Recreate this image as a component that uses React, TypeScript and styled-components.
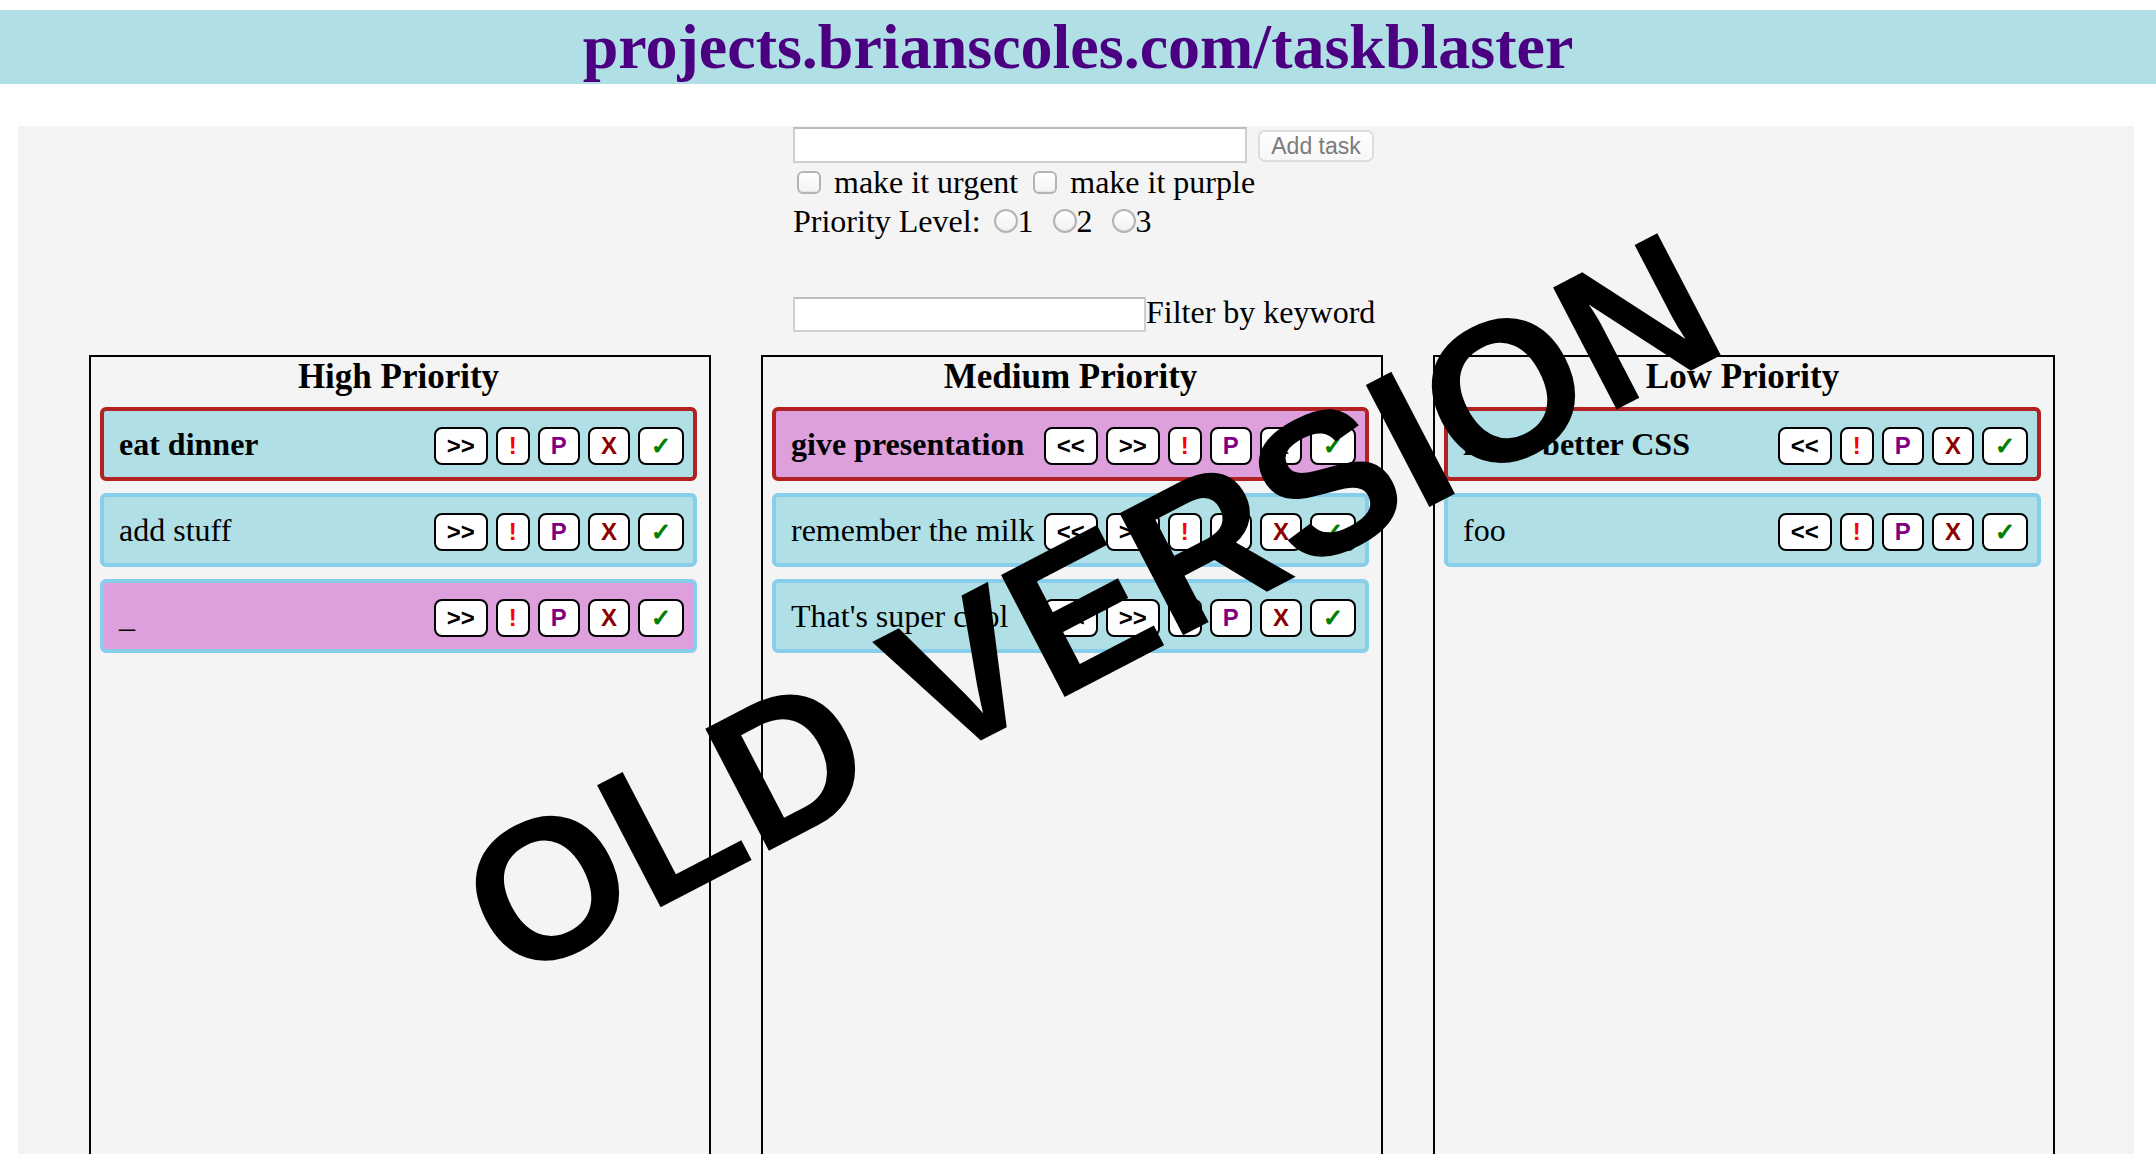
import React from "react";
import styled, { createGlobalStyle } from "styled-components";

const GlobalStyle = createGlobalStyle`
  html, body {
    margin: 0;
    padding: 0;
    background: #ffffff;
  }
  body {
    font-family: "Liberation Serif", "Times New Roman", serif;
    font-size: 32px;
    color: #000;
    overflow: hidden;
  }
`;

const Page = styled.div`
  position: relative;
  width: 2156px;
  padding-top: 10px;
`;

const Header = styled.h1`
  margin: 0;
  background: #b0e0e6;
  color: #4b0082;
  font-family: "Liberation Serif", "Times New Roman", serif;
  font-weight: bold;
  font-size: 64px;
  line-height: 74px;
  text-align: center;
`;

const Panel = styled.main`
  margin: 42px 22px 0 18px;
  padding-top: 1px;
  background: #f4f4f4;
  min-height: 1100px;
`;

const Form = styled.form`
  margin-left: 775px;
  display: flex;
  flex-direction: column;
  width: 620px;
`;

const InputRow = styled.div`
  display: flex;
  align-items: center;
  gap: 11px;
  height: 36px;
`;

const TextField = styled.input<{ $w: number; $h: number }>`
  box-sizing: border-box;
  width: ${(p) => p.$w}px;
  height: ${(p) => p.$h}px;
  margin: 0;
  background: #ffffff;
  border: 2px solid #cfcfcf;
  border-top-color: #bdbdbd;
  outline: none;
`;

const AddButton = styled.button`
  box-sizing: border-box;
  width: 116px;
  height: 32px;
  margin-top: 2px;
  padding: 0;
  background: linear-gradient(#ffffff, #f7f7f7);
  border: 2px solid #dddddd;
  border-radius: 7px;
  color: #7a7a7a;
  font-family: "Liberation Sans", Arial, sans-serif;
  font-size: 23px;
`;

const OptionRow = styled.div<{ $h: number }>`
  display: flex;
  align-items: center;
  height: ${(p) => p.$h}px;
  line-height: 37px;
  white-space: nowrap;
`;

const CheckLabel = styled.label`
  display: inline-flex;
  align-items: center;
  & + & {
    margin-left: 11px;
  }
`;

const Check = styled.input.attrs({ type: "checkbox" })`
  -webkit-appearance: none;
  appearance: none;
  flex: 0 0 auto;
  box-sizing: border-box;
  width: 24px;
  height: 23px;
  margin: 0 13px 0 4px;
  border: 2px solid #b4b4b4;
  border-radius: 6px;
  background: linear-gradient(#ffffff, #f3f3f3);
  box-shadow: inset 0 -1px 1px rgba(0, 0, 0, 0.06);
`;

const RadioOption = styled.label`
  display: inline-flex;
  align-items: center;
  margin-left: 19px;
  &:first-of-type {
    margin-left: 13px;
  }
`;

const Radio = styled.input.attrs({ type: "radio" })`
  -webkit-appearance: none;
  appearance: none;
  flex: 0 0 auto;
  box-sizing: border-box;
  width: 24px;
  height: 24px;
  margin: 0;
  border: 2px solid #b4b4b4;
  border-radius: 50%;
  background: linear-gradient(#ffffff, #f1f1f1);
  box-shadow: inset 0 -1px 1px rgba(0, 0, 0, 0.06);
`;

const FilterRow = styled.div`
  display: flex;
  align-items: center;
  margin-top: 57px;
  height: 35px;
  white-space: nowrap;
`;

const FilterLabel = styled.span`
  line-height: 37px;
  margin-bottom: 4px;
`;

const Columns = styled.div`
  display: flex;
  gap: 50px;
  margin-top: 23px;
  padding-left: 71px;
`;

const Column = styled.section`
  box-sizing: border-box;
  width: 622px;
  min-height: 1000px;
  padding: 0 12px 0 9px;
  border: 2px solid #000;
`;

const ColumnTitle = styled.h3`
  margin: 0 0 10px;
  font-family: "Liberation Serif", "Times New Roman", serif;
  font-weight: bold;
  font-size: 35px;
  line-height: 40px;
  text-align: center;
`;

const Card = styled.div<{ $urgent?: boolean; $purple?: boolean }>`
  box-sizing: border-box;
  display: flex;
  align-items: center;
  justify-content: space-between;
  height: 74px;
  margin-bottom: 12px;
  padding: 0 9px 0 15px;
  border: 4px solid ${(p) => (p.$urgent ? "#b22222" : "#87ceeb")};
  border-radius: 6px;
  background: ${(p) => (p.$purple ? "#dda0dd" : "#b0e0e6")};
`;

const CardText = styled.span<{ $urgent?: boolean }>`
  font-weight: ${(p) => (p.$urgent ? "bold" : "normal")};
  font-size: 32px;
  line-height: 37px;
  white-space: nowrap;
`;

const ButtonGroup = styled.div`
  display: flex;
  gap: 8px;
  margin-top: 4px;
`;

const TaskButton = styled.button<{ $color: string; $heavy?: boolean }>`
  box-sizing: border-box;
  height: 38px;
  padding: 0 11px;
  margin: 0;
  background: #ffffff;
  border: 2px solid #000;
  border-radius: 8px;
  color: ${(p) => p.$color};
  font-family: "Liberation Sans", Arial, "DejaVu Sans", sans-serif;
  font-weight: bold;
  font-size: 24px;
  line-height: 34px;
  -webkit-text-stroke: ${(p) => (p.$heavy ? "1.2px" : "0")} ${(p) => p.$color};
`;

const Stamp = styled.div`
  position: absolute;
  left: 1090px;
  top: 606px;
  transform: translate(-50%, -50%) rotate(-27.5deg);
  font-family: "Liberation Sans", Arial, sans-serif;
  font-weight: bold;
  font-size: 200px;
  line-height: 1.15;
  color: #000;
  white-space: nowrap;
  pointer-events: none;
  z-index: 10;
`;

type Task = { text: string; urgent?: boolean; purple?: boolean };
type ColumnData = { title: string; moves: string[]; tasks: Task[] };

const columns: ColumnData[] = [
  {
    title: "High Priority",
    moves: [">>"],
    tasks: [
      { text: "eat dinner", urgent: true },
      { text: "add stuff" },
      { text: "_", purple: true },
    ],
  },
  {
    title: "Medium Priority",
    moves: ["<<", ">>"],
    tasks: [
      { text: "give presentation", urgent: true, purple: true },
      { text: "remember the milk" },
      { text: "That's super cool" },
    ],
  },
  {
    title: "Low Priority",
    moves: ["<<"],
    tasks: [{ text: "learn better CSS", urgent: true }, { text: "foo" }],
  },
];

const actions = [
  { label: "!", color: "#ff0000", heavy: false },
  { label: "P", color: "#800080", heavy: false },
  { label: "X", color: "#8b0000", heavy: false },
  { label: "✓", color: "#008000", heavy: true },
];

export default function App() {
  return (
    <Page>
      <GlobalStyle />
      <Header>projects.brianscoles.com/taskblaster</Header>
      <Panel>
        <Form onSubmit={(e) => e.preventDefault()}>
          <InputRow>
            <TextField $w={454} $h={36} />
            <AddButton type="button">Add task</AddButton>
          </InputRow>
          <OptionRow $h={39}>
            <CheckLabel>
              <Check />
              make it urgent
            </CheckLabel>
            <CheckLabel>
              <Check />
              make it purple
            </CheckLabel>
          </OptionRow>
          <OptionRow $h={38}>
            Priority Level:
            <RadioOption>
              <Radio name="priority" />1
            </RadioOption>
            <RadioOption>
              <Radio name="priority" />2
            </RadioOption>
            <RadioOption>
              <Radio name="priority" />3
            </RadioOption>
          </OptionRow>
          <FilterRow>
            <TextField $w={353} $h={35} />
            <FilterLabel>Filter by keyword</FilterLabel>
          </FilterRow>
        </Form>
        <Columns>
          {columns.map((col) => (
            <Column key={col.title}>
              <ColumnTitle>{col.title}</ColumnTitle>
              {col.tasks.map((t) => (
                <Card key={t.text} $urgent={t.urgent} $purple={t.purple}>
                  <CardText $urgent={t.urgent}>{t.text}</CardText>
                  <ButtonGroup>
                    {col.moves.map((m) => (
                      <TaskButton key={m} $color="#000">
                        {m}
                      </TaskButton>
                    ))}
                    {actions.map((a) => (
                      <TaskButton key={a.label} $color={a.color} $heavy={a.heavy}>
                        {a.label}
                      </TaskButton>
                    ))}
                  </ButtonGroup>
                </Card>
              ))}
            </Column>
          ))}
        </Columns>
      </Panel>
      <Stamp>OLD VERSION</Stamp>
    </Page>
  );
}
